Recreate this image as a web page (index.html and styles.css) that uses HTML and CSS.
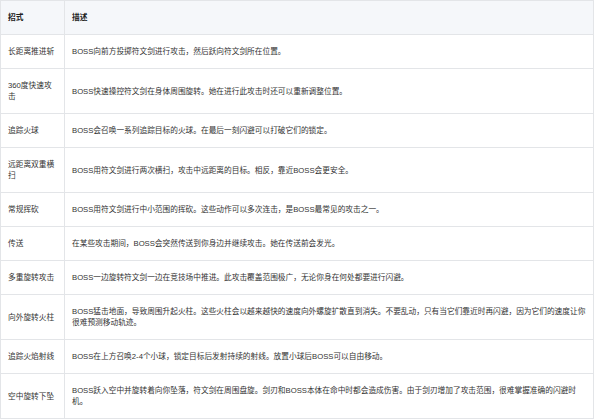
FILE: index.html
```html
<!DOCTYPE html>
<html lang="zh-CN">
<head>
    <meta charset="UTF-8">
    <meta name="viewport" content="width=device-width, initial-scale=1.0">
    <title>BOSS招式</title>
    <link rel="stylesheet" href="styles.css">
</head>
<body>
    <table class="moves">
        <thead>
            <tr>
                <th class="col-name">招式</th>
                <th>描述</th>
            </tr>
        </thead>
        <tbody>
            <tr>
                <td>长距离推进斩</td>
                <td>BOSS向前方投掷符文剑进行攻击，然后跃向符文剑所在位置。</td>
            </tr>
            <tr>
                <td>360度快速攻击</td>
                <td>BOSS快速操控符文剑在身体周围旋转。她在进行此攻击时还可以重新调整位置。</td>
            </tr>
            <tr>
                <td>追踪火球</td>
                <td>BOSS会召唤一系列追踪目标的火球。在最后一刻闪避可以打破它们的锁定。</td>
            </tr>
            <tr>
                <td>远距离双重横扫</td>
                <td>BOSS用符文剑进行两次横扫，攻击中远距离的目标。相反，靠近BOSS会更安全。</td>
            </tr>
            <tr>
                <td>常规挥砍</td>
                <td>BOSS用符文剑进行中小范围的挥砍。这些动作可以多次连击，是BOSS最常见的攻击之一。</td>
            </tr>
            <tr>
                <td>传送</td>
                <td>在某些攻击期间，BOSS会突然传送到你身边并继续攻击。她在传送前会发光。</td>
            </tr>
            <tr>
                <td>多重旋转攻击</td>
                <td>BOSS一边旋转符文剑一边在竞技场中推进。此攻击覆盖范围极广，无论你身在何处都要进行闪避。</td>
            </tr>
            <tr>
                <td>向外旋转火柱</td>
                <td>BOSS猛击地面，导致周围升起火柱。这些火柱会以越来越快的速度向外螺旋扩散直到消失。不要乱动，只有当它们靠近时再闪避，因为它们的速度让你很难预测移动轨迹。</td>
            </tr>
            <tr>
                <td>追踪火焰射线</td>
                <td>BOSS在上方召唤2-4个小球，锁定目标后发射持续的射线。放置小球后BOSS可以自由移动。</td>
            </tr>
            <tr>
                <td>空中旋转下坠</td>
                <td>BOSS跃入空中并旋转着向你坠落，符文剑在周围盘旋。剑刃和BOSS本体在命中时都会造成伤害。由于剑刃增加了攻击范围，很难掌握准确的闪避时机。</td>
            </tr>
        </tbody>
    </table>
</body>
</html>
```

FILE: styles.css
```css
body {
    margin: 0;
    background-color: #fff;
    font-family: "Liberation Sans", Arial, "Noto Sans CJK SC", sans-serif;
    color: #333;
}

.moves {
    width: 594px;
    border-collapse: collapse;
    font-size: 7.7px;
    line-height: 11px;
}

.moves th,
.moves td {
    border: 1px solid #e3e5e8;
    padding: 11px 7px;
    text-align: left;
    vertical-align: middle;
}

.moves th {
    background-color: #f5f7fa;
    font-weight: bold;
    color: #222;
}

.moves .col-name {
    width: 49px;
}
```
